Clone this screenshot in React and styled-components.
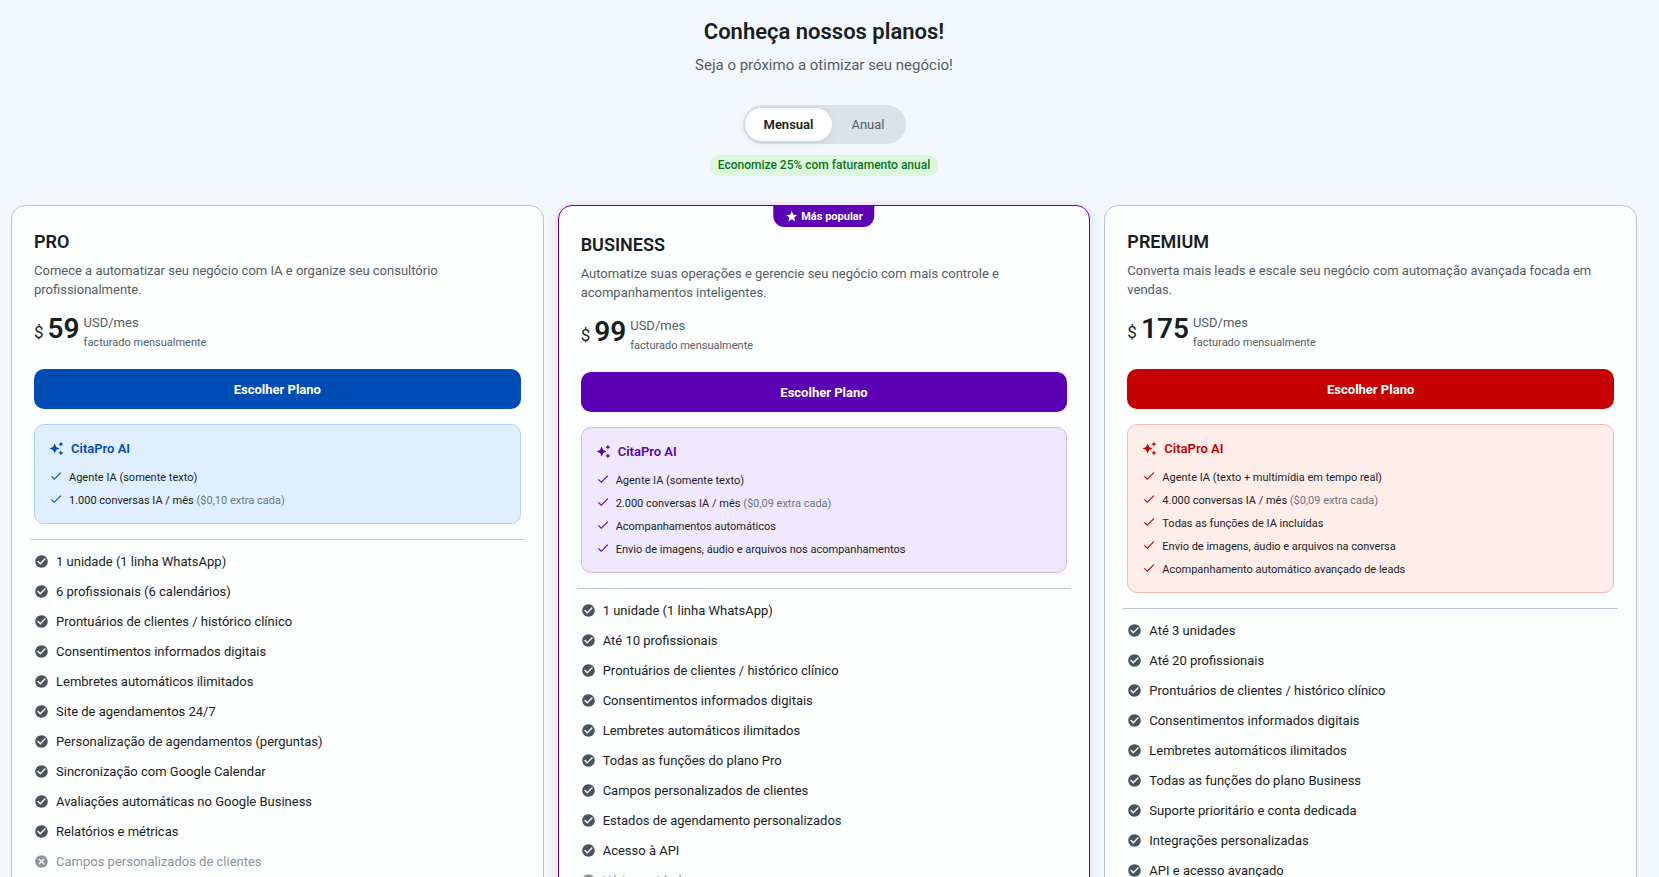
import React, { useState } from "react";
import styled, { createGlobalStyle } from "styled-components";
import { MdAutoAwesome, MdCancel, MdCheck, MdCheckCircle, MdStar } from "react-icons/md";

const GlobalStyle = createGlobalStyle`
  *, *::before, *::after { box-sizing: border-box; }
  body {
    margin: 0;
    background: #f3f8fd;
    color: #171d22;
    font-family: Roboto, "Liberation Sans", sans-serif;
    font-size: 13px;
  }
  h1, h2, h3, p, ul { margin: 0; padding: 0; }
  ul { list-style: none; }
  button { font-family: inherit; cursor: pointer; }
`;

const Page = styled.main`
  min-height: 100vh;
  padding: 17px 22px 24px 11px;
`;

const Header = styled.header`
  display: flex;
  flex-direction: column;
  align-items: center;
  margin-bottom: 29px;
`;

const PageTitle = styled.h1`
  font-size: 22px;
  line-height: 30px;
  font-weight: 600;
`;

const Subtitle = styled.p`
  margin-top: 7px;
  font-size: 15px;
  line-height: 22px;
  color: #525c64;
`;

const Toggle = styled.div`
  display: flex;
  margin-top: 29px;
  padding: 3px 2px;
  border-radius: 20px;
  background: #dbe3ea;
`;

const ToggleOption = styled.button`
  height: 33px;
  padding: 0 19px;
  border: 0;
  border-radius: 17px;
  font-size: 13px;
  font-weight: ${({ $active }) => ($active ? 600 : 400)};
  color: ${({ $active }) => ($active ? "#171d22" : "#525c64")};
  background: ${({ $active }) => ($active ? "#fff" : "transparent")};
  box-shadow: ${({ $active }) => ($active ? "0 2px 8px rgba(23, 40, 60, 0.1)" : "none")};
`;

const Savings = styled.p`
  margin-top: 11px;
  padding: 0 8px;
  border-radius: 11px;
  background: #dcf8dc;
  color: #0a7520;
  font-size: 12px;
  line-height: 21px;
  font-weight: 500;
`;

const Plans = styled.section`
  display: grid;
  grid-template-columns: repeat(3, minmax(0, 1fr));
  gap: 14px;
`;

const Card = styled.article`
  position: relative;
  padding: ${({ $featured }) => ($featured ? "25px" : "22px")} 22px 22px;
  border: 1px solid ${({ $featured, $theme }) => ($featured ? $theme.main : "#bcc5ce")};
  border-radius: 14px;
  background: #fdfefe;
  box-shadow: ${({ $featured }) =>
    $featured ? "0 0 0 3px #f0e8fd, 0 4px 14px rgba(91, 0, 181, 0.1)" : "none"};
`;

const Popular = styled.span`
  position: absolute;
  top: 0;
  left: 50%;
  display: flex;
  align-items: center;
  gap: 3px;
  height: 21px;
  padding: 0 12px;
  border-radius: 0 0 11px 11px;
  transform: translateX(-50%);
  background: ${({ $theme }) => $theme.main};
  color: #fff;
  font-size: 11px;
  font-weight: 700;
  white-space: nowrap;
`;

const PlanName = styled.h2`
  font-size: 18px;
  line-height: 27px;
  font-weight: 600;
`;

const Description = styled.p`
  min-height: 38px;
  margin-top: 6px;
  line-height: 19px;
  color: #525c64;
`;

const Price = styled.div`
  display: flex;
  gap: 4px;
  margin-top: 14px;
  line-height: 20px;
`;

const Amount = styled.div`
  display: flex;
  align-items: baseline;
  gap: 4px;
  line-height: 32px;
`;

const Currency = styled.span`
  font-size: 17px;
`;

const Value = styled.span`
  font-size: 28px;
  font-weight: 600;
`;

const Terms = styled.div`
  color: #525c64;
`;

const Billing = styled.p`
  font-size: 11px;
`;

const ChooseButton = styled.button`
  display: block;
  width: 100%;
  height: 40px;
  margin: 16px 0 15px;
  border: 0;
  border-radius: 10px;
  background: ${({ $theme }) => $theme.main};
  color: #fff;
  font-size: 13px;
  font-weight: 700;
`;

const AiBox = styled.section`
  padding: 14px 14px 11px;
  border: 1px solid ${({ $theme }) => $theme.line};
  border-radius: 10px;
  background: ${({ $theme }) => $theme.soft};
`;

const AiTitle = styled.h3`
  display: flex;
  align-items: center;
  gap: 7px;
  margin-bottom: 8px;
  font-size: 13px;
  line-height: 19px;
  font-weight: 600;
  color: ${({ $theme }) => $theme.main};
`;

const AiItem = styled.li`
  display: flex;
  align-items: center;
  gap: 6px;
  font-size: 11px;
  line-height: 23px;

  svg {
    flex: none;
    margin-bottom: 3px;
    color: ${({ $theme }) => $theme.main};
  }
`;

const Extra = styled.span`
  color: #6c757d;
`;

const Divider = styled.hr`
  height: 1px;
  margin: 15px -4px 7px;
  border: 0;
  background: #bcc5ce;
`;

const Feature = styled.li`
  display: flex;
  align-items: center;
  gap: 7px;
  line-height: 30px;
  color: ${({ $off }) => ($off ? "#8c9399" : "inherit")};

  svg {
    flex: none;
    margin-bottom: 2px;
    color: ${({ $off }) => ($off ? "#8c9399" : "#49545c")};
  }
`;

const themes = {
  blue: { main: "#004cb5", soft: "#e0efff", line: "#b3cff1" },
  purple: { main: "#5b00b5", soft: "#f0e9fd", line: "#cfb9ee" },
  red: { main: "#c40000", soft: "#ffedea", line: "#f3b9b5" },
};

const plans = [
  {
    name: "PRO",
    theme: themes.blue,
    price: "59",
    description:
      "Comece a automatizar seu negócio com IA e organize seu consultório profissionalmente.",
    ai: [["Agente IA (somente texto)"], ["1.000 conversas IA / mês", "($0,10 extra cada)"]],
    features: [
      "1 unidade (1 linha WhatsApp)",
      "6 profissionais (6 calendários)",
      "Prontuários de clientes / histórico clínico",
      "Consentimentos informados digitais",
      "Lembretes automáticos ilimitados",
      "Site de agendamentos 24/7",
      "Personalização de agendamentos (perguntas)",
      "Sincronização com Google Calendar",
      "Avaliações automáticas no Google Business",
      "Relatórios e métricas",
    ],
    missing: ["Campos personalizados de clientes"],
  },
  {
    name: "BUSINESS",
    theme: themes.purple,
    featured: true,
    price: "99",
    description:
      "Automatize suas operações e gerencie seu negócio com mais controle e acompanhamentos inteligentes.",
    ai: [
      ["Agente IA (somente texto)"],
      ["2.000 conversas IA / mês", "($0,09 extra cada)"],
      ["Acompanhamentos automáticos"],
      ["Envio de imagens, áudio e arquivos nos acompanhamentos"],
    ],
    features: [
      "1 unidade (1 linha WhatsApp)",
      "Até 10 profissionais",
      "Prontuários de clientes / histórico clínico",
      "Consentimentos informados digitais",
      "Lembretes automáticos ilimitados",
      "Todas as funções do plano Pro",
      "Campos personalizados de clientes",
      "Estados de agendamento personalizados",
      "Acesso à API",
    ],
    missing: ["Várias unidades"],
  },
  {
    name: "PREMIUM",
    theme: themes.red,
    price: "175",
    description:
      "Converta mais leads e escale seu negócio com automação avançada focada em vendas.",
    ai: [
      ["Agente IA (texto + multimídia em tempo real)"],
      ["4.000 conversas IA / mês", "($0,09 extra cada)"],
      ["Todas as funções de IA incluídas"],
      ["Envio de imagens, áudio e arquivos na conversa"],
      ["Acompanhamento automático avançado de leads"],
    ],
    features: [
      "Até 3 unidades",
      "Até 20 profissionais",
      "Prontuários de clientes / histórico clínico",
      "Consentimentos informados digitais",
      "Lembretes automáticos ilimitados",
      "Todas as funções do plano Business",
      "Suporte prioritário e conta dedicada",
      "Integrações personalizadas",
      "API e acesso avançado",
    ],
    missing: [],
  },
];

function PlanCard({ plan }) {
  const { theme } = plan;
  return (
    <Card $featured={plan.featured} $theme={theme}>
      {plan.featured && (
        <Popular $theme={theme}>
          <MdStar size={13} aria-hidden="true" />
          Más popular
        </Popular>
      )}
      <PlanName>{plan.name}</PlanName>
      <Description>{plan.description}</Description>
      <Price>
        <Amount>
          <Currency>$</Currency>
          <Value>{plan.price}</Value>
        </Amount>
        <Terms>
          <p>USD/mes</p>
          <Billing>facturado mensualmente</Billing>
        </Terms>
      </Price>
      <ChooseButton type="button" $theme={theme}>
        Escolher Plano
      </ChooseButton>
      <AiBox $theme={theme}>
        <AiTitle $theme={theme}>
          <MdAutoAwesome size={15} aria-hidden="true" />
          CitaPro AI
        </AiTitle>
        <ul>
          {plan.ai.map(([text, extra]) => (
            <AiItem key={text} $theme={theme}>
              <MdCheck size={14} aria-hidden="true" />
              <span>
                {text} {extra && <Extra>{extra}</Extra>}
              </span>
            </AiItem>
          ))}
        </ul>
      </AiBox>
      <Divider />
      <ul>
        {plan.features.map((text) => (
          <Feature key={text}>
            <MdCheckCircle size={15} aria-hidden="true" />
            {text}
          </Feature>
        ))}
        {plan.missing.map((text) => (
          <Feature key={text} $off>
            <MdCancel size={15} aria-hidden="true" />
            {text}
          </Feature>
        ))}
      </ul>
    </Card>
  );
}

export default function App() {
  const [cycle, setCycle] = useState("Mensual");
  return (
    <Page>
      <GlobalStyle />
      <Header>
        <PageTitle>Conheça nossos planos!</PageTitle>
        <Subtitle>Seja o próximo a otimizar seu negócio!</Subtitle>
        <Toggle role="group" aria-label="Faturamento">
          {["Mensual", "Anual"].map((name) => (
            <ToggleOption
              key={name}
              type="button"
              $active={cycle === name}
              aria-pressed={cycle === name}
              onClick={() => setCycle(name)}
            >
              {name}
            </ToggleOption>
          ))}
        </Toggle>
        <Savings>Economize 25% com faturamento anual</Savings>
      </Header>
      <Plans>
        {plans.map((plan) => (
          <PlanCard key={plan.name} plan={plan} />
        ))}
      </Plans>
    </Page>
  );
}
